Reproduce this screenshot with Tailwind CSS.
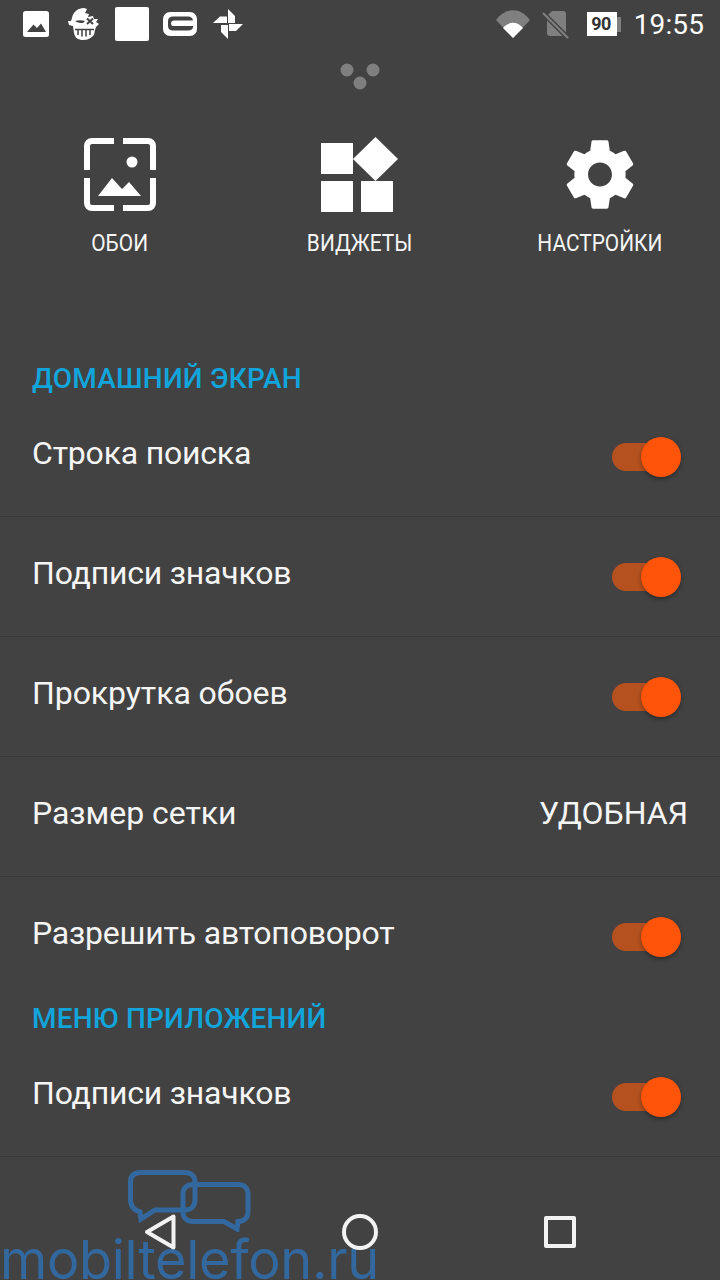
<!DOCTYPE html>
<html lang="ru">
<head>
<meta charset="utf-8">
<script src="https://cdn.jsdelivr.net/npm/@tailwindcss/browser@4"></script>
</head>
<body class="m-0">
<div class="relative w-[720px] h-[1280px] overflow-hidden bg-[#424242] text-white font-['Roboto',sans-serif] flex flex-col">

  <!-- status bar -->
  <div class="h-[48px] flex items-start shrink-0">
    <svg class="block" width="260" height="48" viewBox="0 0 260 48">
      <!-- image -->
      <rect x="23" y="11" width="26" height="26" rx="2.5" fill="#fff"/>
      <path d="M27 32 L33.5 24.5 L37 28 L41 23.5 L46 32 Z" fill="#424242"/>
      <!-- skull -->
      <path d="M72 18 C73 12 78 8 84 8 L87 9 L85 13 L89 14 L88 17 L93 16 L94 19 L98 19 L96 22 L99 24 L96 27 L95 30 L94 35 C91 38 88 40 83 40 C78 40 75 38 74 33 L73 26 L69 25 L68 21 L71 21 Z" fill="#fff"/>
      <path d="M75 21 C78 20 82 20 85 21 L83 23 C80 23 78 23 75 21 Z" fill="#424242"/>
      <path d="M87 18.500 L93 24 M93 18.500 L87 24" stroke="#424242" stroke-width="2" fill="none"/>
      <path d="M75 29.500 H94 M78 29 V35 M82 29 V36.500 M86 29 V36.500 M90 29 V35" stroke="#424242" stroke-width="1.500" fill="none"/>
      <!-- white square -->
      <rect x="115" y="7" width="34" height="34" rx="2" fill="#fff"/>
      <!-- gameloft -->
      <rect x="163" y="12" width="34" height="24" rx="7" fill="#fff"/>
      <path d="M193 21 C193 18 191 16.500 188 16.500 H173 C170 16.500 168 18 168 21 V26 C168 29 170 30.500 173 30.500 H188 C191 30.500 193 29 193 27 Z" fill="#424242"/>
      <path d="M171 24 C171 22 172 20.500 174 20.500 H194 V26 H172 Z" fill="#fff"/>
      <!-- pinwheel -->
      <path d="M228 9 L235 16 L235 23 L228 23 Z" fill="#fff"/>
      <path d="M243 24 L236 31 L229 31 L229 24 Z" fill="#fff"/>
      <path d="M228 39 L221 32 L221 25 L228 25 Z" fill="#fff"/>
      <path d="M213 23 L220 16.500 L227 16.500 L227 23 Z" fill="#fff"/>
    </svg>
    <div class="ml-auto flex items-start">
      <svg class="block" width="138" height="48" viewBox="494 0 138 48">
        <path d="M494 20 C504 7 518 7 528 20 L511 38 Z" fill="#7f7f7f"/>
        <path d="M501 28 C507 21 515 21 521 28 L511 38 Z" fill="#fff"/>
        <path d="M550 11 H561 C563 11 564 12 564 14 V36 H548 C546 36 545 35 545 33 V16 Z" fill="#7f7f7f"/>
        <path d="M541 13 L566 38" stroke="#424242" stroke-width="5"/>
        <path d="M541 13 L566 38" stroke="#7f7f7f" stroke-width="2.200"/>
        <rect x="585" y="12" width="30" height="24" fill="#fff"/>
        <rect x="615" y="17" width="4" height="15" fill="#7f7f7f"/>
      </svg>
    </div>
    <span class="absolute left-[586px] top-[12px] w-[30px] h-[24px] flex items-center justify-center text-[#333] text-[18px] font-bold leading-none tracking-[-0.5px]">90</span>
    <span class="mr-[16px] mt-[9px] text-[28px] leading-[32px] font-normal tracking-[0.1px]">19:55</span>
  </div>

  <!-- panel handle -->
  <div class="h-[42px] shrink-0 flex justify-center pt-[15px]">
    <svg class="block" width="40" height="27" viewBox="0 0 40 27">
      <circle cx="7" cy="7" r="6.500" fill="#7f7f7f"/>
      <circle cx="33" cy="7" r="6.500" fill="#7f7f7f"/>
      <circle cx="20" cy="20" r="6.500" fill="#7f7f7f"/>
    </svg>
  </div>

  <!-- shortcuts -->
  <div class="h-[268px] shrink-0 grid grid-cols-3 pt-[46px]">
    <div class="flex flex-col items-center">
      <svg class="block" width="72" height="76" viewBox="84 136 72 76">
        <path d="M114 141 H92 C89 141 87 143 87 146 V170 M123 141 H148 C151 141 153 143 153 146 V170 M87 178 V203 C87 206 89 208 92 208 H114 M153 178 V203 C153 206 151 208 148 208 H123" fill="none" stroke="#fff" stroke-width="6"/>
        <circle cx="132" cy="162" r="5.500" fill="#fff"/>
        <path d="M98 196 L112 178 L122 189 L129 182 L141 196 Z" fill="#fff"/>
      </svg>
      <span class="mt-[17px] text-[24px] leading-[28px] scale-x-[0.87] text-[#f5f5f5]">ОБОИ</span>
    </div>
    <div class="flex flex-col items-center">
      <svg class="block" width="80" height="76" viewBox="320 136 80 76">
        <rect x="321" y="143" width="32" height="31" fill="#fff"/>
        <rect x="321" y="181" width="32" height="31" fill="#fff"/>
        <rect x="361" y="181" width="32" height="31" fill="#fff"/>
        <path d="M375.500 137 L398 159 L375.500 181 L353 159 Z" fill="#fff"/>
      </svg>
      <span class="mt-[17px] text-[24px] leading-[28px] scale-x-[0.87] text-[#f5f5f5]">ВИДЖЕТЫ</span>
    </div>
    <div class="flex flex-col items-center">
      <svg class="block" width="82" height="76" viewBox="0 0.730 24 22.240" fill="#fff">
        <path d="M19.43 12.98c.04-.32.07-.64.07-.98s-.03-.66-.07-.98l2.11-1.65c.19-.15.24-.42.12-.64l-2-3.46c-.12-.22-.39-.3-.61-.22l-2.49 1c-.52-.4-1.08-.73-1.69-.98l-.38-2.65C14.46 2.18 14.25 2 14 2h-4c-.25 0-.46.18-.49.42l-.38 2.65c-.61.25-1.17.59-1.69.98l-2.49-1c-.23-.09-.49 0-.61.22l-2 3.46c-.13.22-.07.49.12.64l2.11 1.65c-.04.32-.07.65-.07.98s.03.66.07.98l-2.11 1.65c-.19.15-.24.42-.12.64l2 3.46c.12.22.39.3.61.22l2.49-1c.52.4 1.08.73 1.69.98l.38 2.65c.03.24.24.42.49.42h4c.25 0 .46-.18.49-.42l.38-2.65c.61-.25 1.17-.59 1.69-.98l2.49 1c.23.09.49 0 .61-.22l2-3.46c.12-.22.07-.49-.12-.64l-2.11-1.65zM12 15.5c-1.93 0-3.5-1.57-3.5-3.5s1.57-3.5 3.5-3.5 3.5 1.57 3.5 3.5-1.57 3.5-3.5 3.5z"/>
      </svg>
      <span class="mt-[17px] text-[24px] leading-[28px] scale-x-[0.87] text-[#f5f5f5]">НАСТРОЙКИ</span>
    </div>
  </div>

  <!-- list -->
  <div class="h-[39px] shrink-0 pl-[32px] pt-[2px] flex items-center text-[#12a5dc] text-[28px] font-medium leading-none tracking-[0.2px]">ДОМАШНИЙ ЭКРАН</div>

  <div class="h-[120px] shrink-0 pl-[32px] pr-[39px] flex items-center justify-between border-b border-[#393939] text-[32px] text-[#f5f5f5] tracking-[-0.2px]">
    <span class="-mt-[7px]">Строка поиска</span>
    <div class="flex items-center"><div class="w-[58px] h-[28px] rounded-full bg-[#b5511f]"></div><div class="w-[40px] h-[40px] -ml-[29px] rounded-full bg-[#ff5409] shadow-[0_2px_4px_rgba(0,0,0,0.35)]"></div></div>
  </div>
  <div class="h-[120px] shrink-0 pl-[32px] pr-[39px] flex items-center justify-between border-b border-[#393939] text-[32px] text-[#f5f5f5] tracking-[-0.2px]">
    <span class="-mt-[7px]">Подписи значков</span>
    <div class="flex items-center"><div class="w-[58px] h-[28px] rounded-full bg-[#b5511f]"></div><div class="w-[40px] h-[40px] -ml-[29px] rounded-full bg-[#ff5409] shadow-[0_2px_4px_rgba(0,0,0,0.35)]"></div></div>
  </div>
  <div class="h-[120px] shrink-0 pl-[32px] pr-[39px] flex items-center justify-between border-b border-[#393939] text-[32px] text-[#f5f5f5] tracking-[-0.07px]">
    <span class="-mt-[7px]">Прокрутка обоев</span>
    <div class="flex items-center"><div class="w-[58px] h-[28px] rounded-full bg-[#b5511f]"></div><div class="w-[40px] h-[40px] -ml-[29px] rounded-full bg-[#ff5409] shadow-[0_2px_4px_rgba(0,0,0,0.35)]"></div></div>
  </div>
  <div class="h-[120px] shrink-0 pl-[32px] pr-[32px] flex items-center justify-between border-b border-[#393939] text-[32px] text-[#f5f5f5]">
    <span class="-mt-[7px] tracking-[-0.05px]">Размер сетки</span>
    <span class="-mt-[7px]">УДОБНАЯ</span>
  </div>
  <div class="h-[120px] shrink-0 pl-[32px] pr-[39px] flex items-center justify-between text-[32px] text-[#f5f5f5] tracking-[-0.2px]">
    <span class="-mt-[8px]">Разрешить автоповорот</span>
    <div class="flex items-center"><div class="w-[58px] h-[28px] rounded-full bg-[#b5511f]"></div><div class="w-[40px] h-[40px] -ml-[29px] rounded-full bg-[#ff5409] shadow-[0_2px_4px_rgba(0,0,0,0.35)]"></div></div>
  </div>

  <div class="h-[40px] shrink-0 pl-[32px] pt-[4px] flex items-center text-[#12a5dc] text-[28px] font-medium leading-none tracking-[0.2px]">МЕНЮ ПРИЛОЖЕНИЙ</div>

  <div class="h-[120px] shrink-0 pl-[32px] pr-[39px] flex items-center justify-between border-b border-[#393939] text-[32px] text-[#f5f5f5] tracking-[-0.2px]">
    <span class="-mt-[7px]">Подписи значков</span>
    <div class="flex items-center"><div class="w-[58px] h-[28px] rounded-full bg-[#b5511f]"></div><div class="w-[40px] h-[40px] -ml-[29px] rounded-full bg-[#ff5409] shadow-[0_2px_4px_rgba(0,0,0,0.35)]"></div></div>
  </div>

  <!-- watermark overlay -->
  <svg class="absolute left-[128px] top-[1170px]" width="124" height="62" viewBox="128 1170 124 62" fill="none">
    <path d="M141 1172.500 H185 C191 1172.500 195 1176 195 1182 V1200 C195 1206 191 1210 185 1210 H155 L141 1219 L140 1212 C133 1210 130.500 1206 130.500 1200 V1182 C130.500 1176 134 1172.500 141 1172.500 Z" stroke="#33689f" stroke-width="5"/>
    <path d="M193 1184.500 H238 C244 1184.500 248 1188 248 1194 V1212 C248 1218 244 1221.500 238 1221.500 L237 1229 L224 1221.500 H193 C187 1221.500 183 1218 183 1212 V1194 C183 1188 187 1184.500 193 1184.500 Z" stroke="#33689f" stroke-width="5"/>
  </svg>
  <span class="absolute left-0 top-[1239px] text-[54px] leading-[41px] font-['Inter',sans-serif] font-normal text-[#33689f] whitespace-nowrap tracking-[-0.3px]">mobiltelefon.ru</span>

  <!-- navigation bar -->
  <div class="absolute left-0 right-0 top-[1208px] h-[48px] flex justify-center gap-[160px]">
    <div class="w-[40px] flex justify-center items-center">
      <svg class="block" width="40" height="48" viewBox="0 0 40 48"><path d="M7 24 L33.500 8.500 V39.500 Z" fill="none" stroke="#f2f2f2" stroke-width="4" stroke-linejoin="round"/></svg>
    </div>
    <div class="w-[40px] flex justify-center items-center">
      <div class="w-[36px] h-[36px] rounded-full border-[4px] border-[#f2f2f2]"></div>
    </div>
    <div class="w-[40px] flex justify-center items-center">
      <div class="w-[32px] h-[32px] rounded-[2px] border-[4px] border-[#f2f2f2]"></div>
    </div>
  </div>
</div>
</body>
</html>
